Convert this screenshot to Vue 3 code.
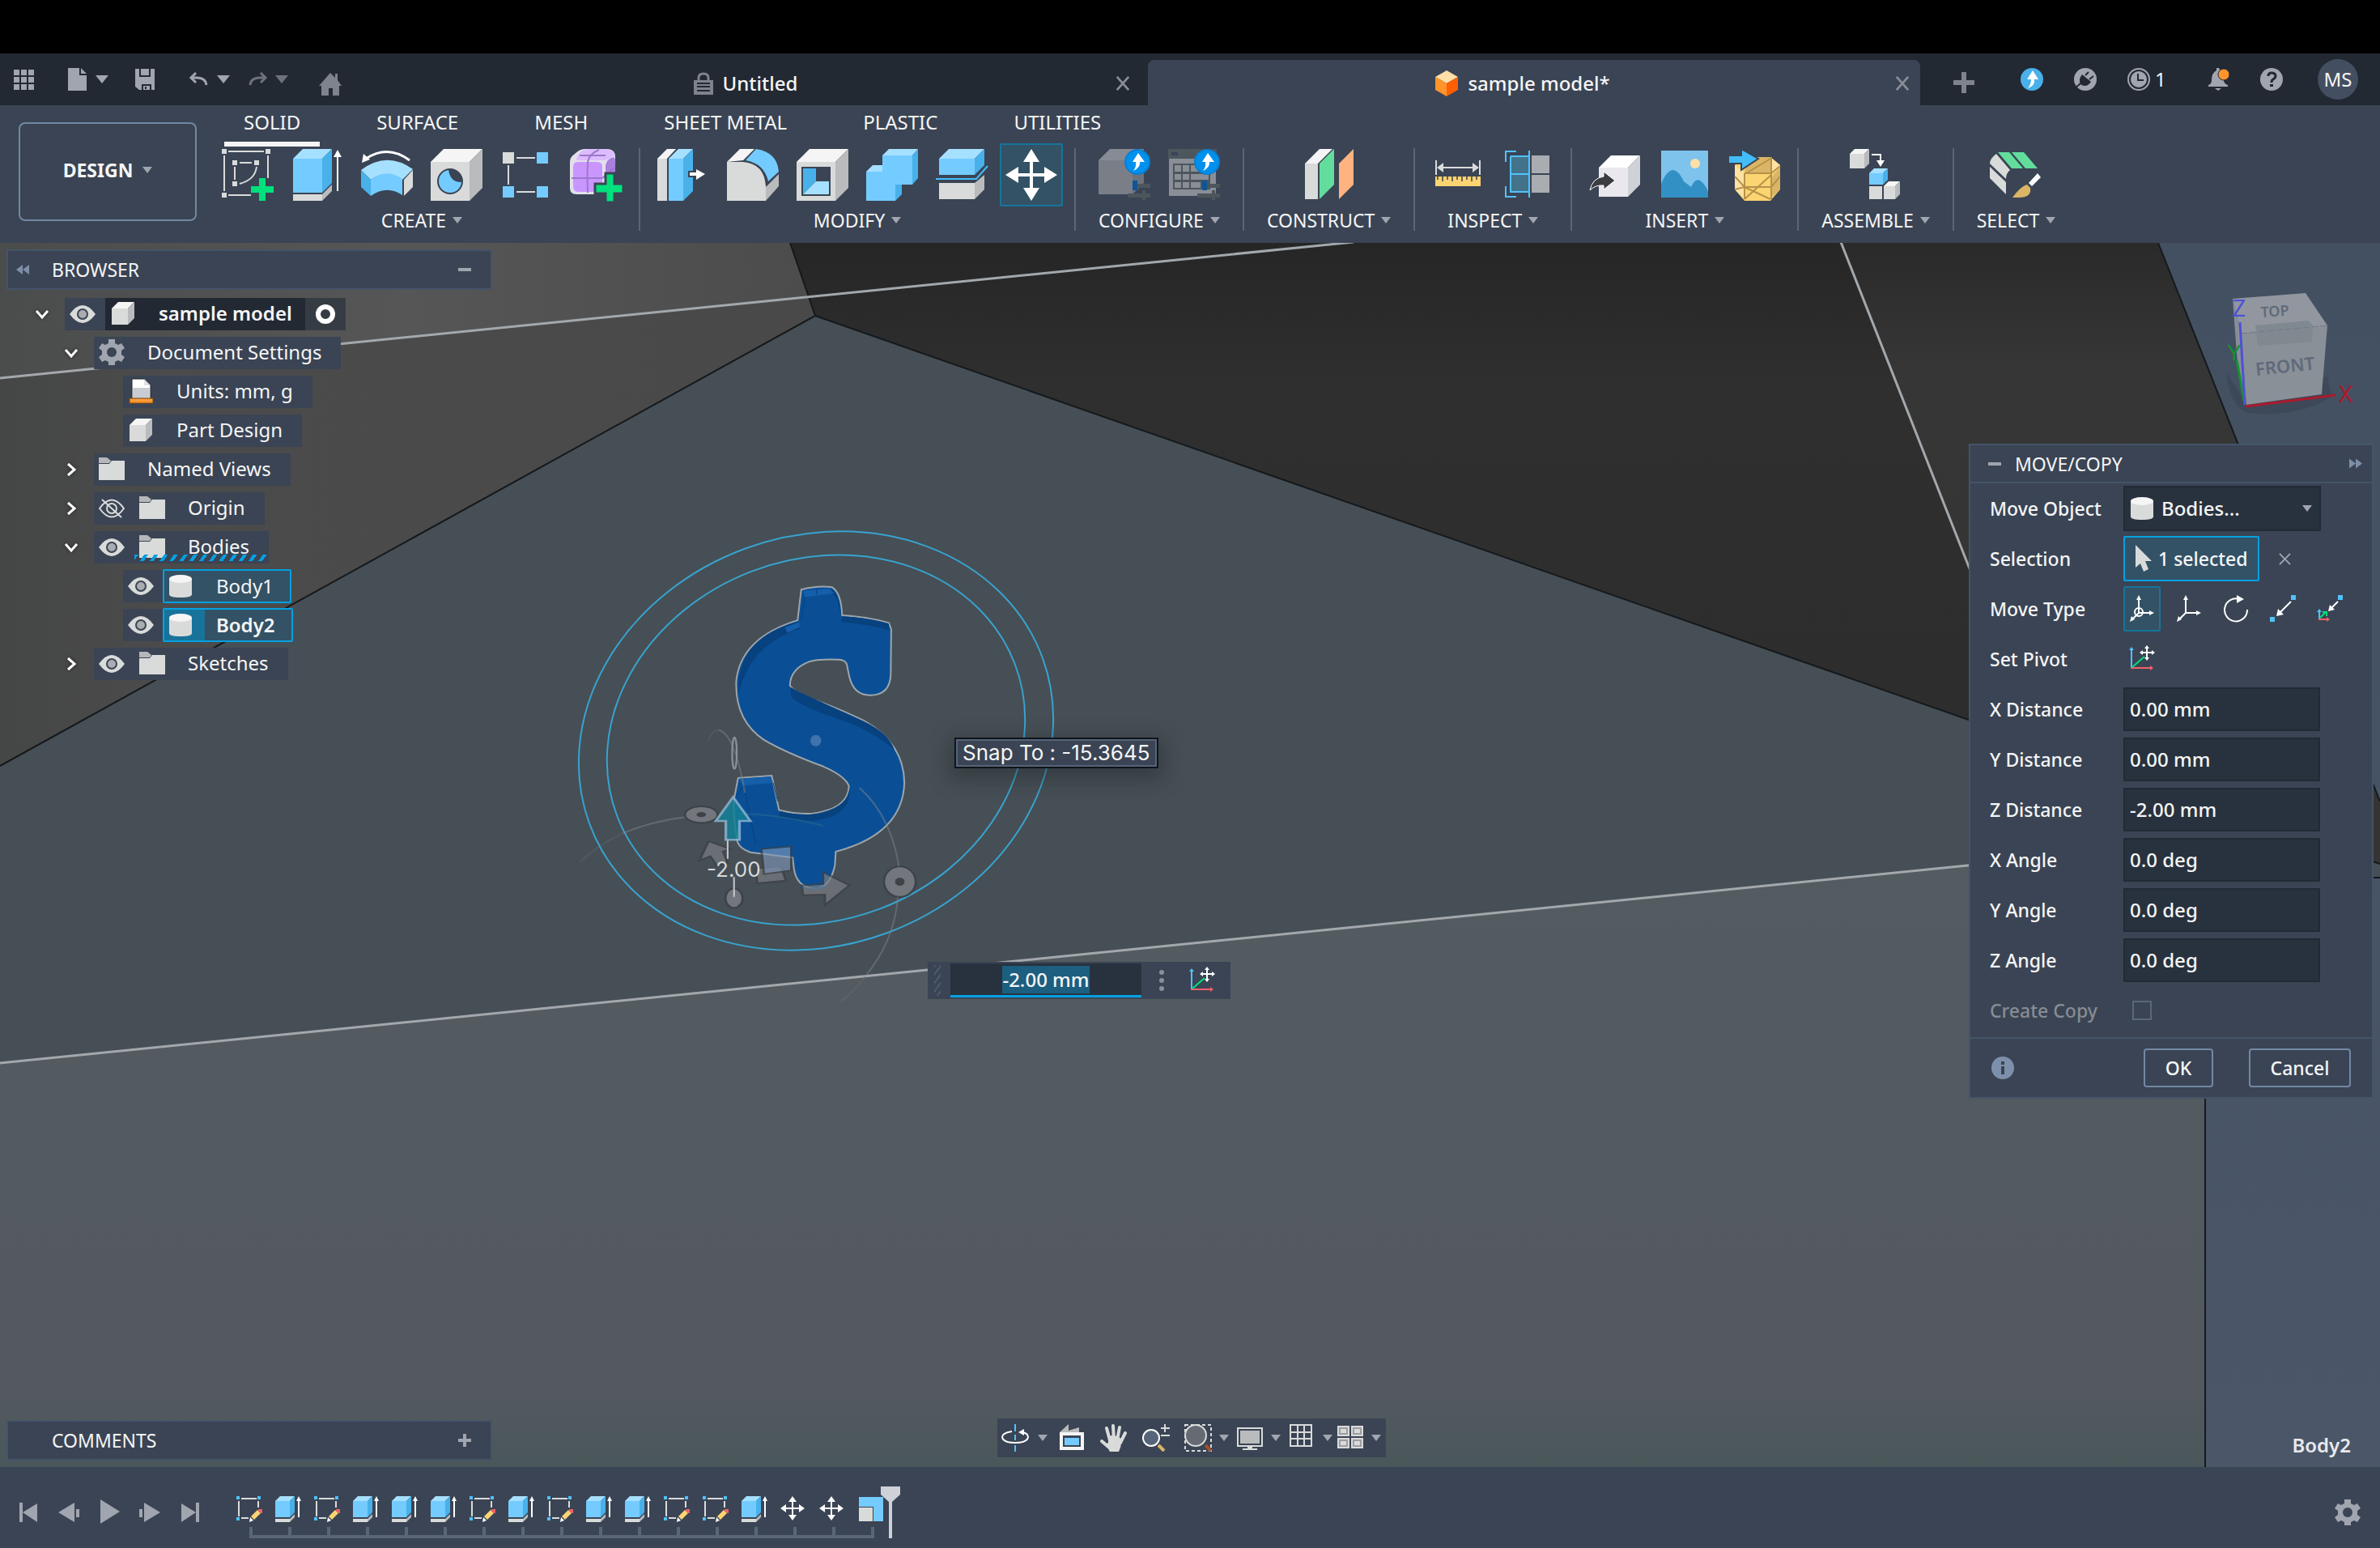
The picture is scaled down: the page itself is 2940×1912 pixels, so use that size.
<script setup>
import { ref } from 'vue'

const W = '#d9dbda'
const WT = '#f5f5f5'
const WS = '#b9bbbd'
const B = '#74cbff'
const BT = '#a6e0ff'
const BS = '#49b1ea'
const DK = '#3a4454'

const p = (fill, d, extra = '') => `<path fill="${fill}" d="${d}" ${extra}/>`
const l = (stroke, w, d, extra = '') => `<path fill="none" stroke="${stroke}" stroke-width="${w}" d="${d}" ${extra}/>`
const box = (x, y, w, h, d, f = W, t = WT, s = WS) =>
  p(f, `M${x} ${y + d}h${w}v${h}h${-w}z`) +
  p(t, `M${x} ${y + d}l${d} ${-d}h${w}l${-d} ${d}z`) +
  p(s, `M${x + w} ${y + d}l${d} ${-d}v${h}l${-d} ${d}z`)
const badge =
  `<circle cx="48" cy="16" r="15" fill="#0091ee" stroke="#0a7fd0" stroke-width="2"/>` +
  p('#fff', 'M49 5L57 16H51Q52 23 43 27Q47 22 46 16H42z')
const cfgPlus =
  p('#4c565c', 'M44 43h20v5h-20zM36 55h28v5h-28zM54 51h4v12h-4z') + p('#0f5596', 'M42 39h6v12h-6z')

const big = {
  sketch:
    p(W, 'M0 0h6v6h-6zM54 0h6v6h-6zM0 54h6v6h-6zM13 14h6v6h-6zM40 14h6v6h-6zM13 40h6v6h-6z') +
    l(W, 2, 'M8 3H52M3 8V52M57 8V36M8 57H36M22 17H37M16 22V38M43 22Q41 38 22 43') +
    p('#00e07c', 'M46 36h8v10h10v8h-10v10h-8v-10h-10v-8h10z'),
  extrude:
    '<g transform="translate(2)">' + box(0, 0, 36, 42, 12, B, BT, BS) + p(W, 'M0 56h36v8h-36z') +
    p(WS, 'M36 56l12 -12v8l-12 12z') + l('#fff', 2, 'M55 8V52') + p('#fff', 'M55 1l5 9h-10z') + '</g>',
  revolve:
    l('#fff', 3, 'M60 14Q33 -6 6 12') + p('#fff', 'M1 17L3 6L11 13z') +
    p(BT, 'M0 26Q32 2 64 25L51 38Q32 24 12 38z') + p(BS, 'M0 26l12 12v20l-12 -11z') +
    p(B, 'M12 38Q32 23 51 37V57Q32 44 12 58z') + p(W, 'M53 38L64 26V47L53 58z'),
  hole:
    box(0, 0, 48, 48, 16) + '<circle cx="24" cy="40" r="15" fill="#74cbff" stroke="#3a4454" stroke-width="2"/>' +
    p(DK, 'M22 25A15 15 0 0 1 39 41Q24 42 22 25z'),
  pattern:
    p(W, 'M3 4h14v14h-14z') + p(B, 'M45 4h14v14h-14zM3 46h14v14h-14zM45 46h14v14h-14z') +
    l(W, 2, 'M20 11H43M20 53H43M10 20V44'),
  form:
    p('#e3e0ea', 'M0 16Q0 10 6 6Q12 0 18 0H46Q56 0 56 10V38Q56 42 50 48Q42 56 36 56H8Q0 56 0 48z') +
    p('#dcbcff', 'M14 3Q18 0 24 0H46Q54 1 55 8Q50 12 44 14H8Q8 8 14 3z') +
    p('#c996ff', 'M4 22Q4 16 10 16H34Q40 16 40 22V46Q40 53 34 53H10Q4 53 4 46z') +
    p('#aa7fde', 'M44 20Q46 12 54 10Q57 12 56 20V38Q54 44 44 46z') +
    l('#9d78cc', 2, 'M2 36H40L56 22M22 54Q21 36 22 16Q24 6 36 1M12 8H44') +
    p('#00e07c', 'M44 30h11v13h11v12h-11v11h-11v-11h-13v-12h13z', 'stroke="#3a4454" stroke-width="3"'),
  press:
    p(W, 'M0 12h12v52h-12z') + p(WT, 'M0 12L12 0H23L12 12z') + box(14, 0, 18, 52, 12, B, BT, BS) +
    l(DK, 8, 'M38 31H52') + l('#fff', 4, 'M40 31H50') + p('#fff', 'M48 25l11 6l-11 7z'),
  fillet:
    p(W, 'M0 16H20Q46 18 48 46V64H0z') + p(WT, 'M0 16L16 0H34L20 14z') +
    p(B, 'M36 0Q62 4 64 28L51 40Q46 18 23 14z') + p(WS, 'M48 47L64 31V46L48 64z'),
  shell:
    box(0, 0, 48, 48, 16) + p(DK, 'M6 22h36v36h-36z') + p(BS, 'M8 24h16v16l-16 16z') + p(BT, 'M24 40h16v16h-32z'),
  combine:
    p(B, 'M0 28H20V8H57V44H36V64H0z') + p(BT, 'M20 8L28 0H64L57 8zM0 28L8 20H20V28z') +
    p(BS, 'M57 8L64 0V36L57 44zM36 44H44V56L36 64z'),
  split:
    box(4, 0, 44, 20, 12, B, BT, BS) + l('#42bdfa', 2, 'M0 37H50L64 21') + p(W, 'M4 42h44v20h-44z') +
    p(WS, 'M48 42L60 32V50L48 62z'),
  move:
    l('#fff', 4, 'M32 12V52M12 32H52') +
    p('#fff', 'M32 0l10 16h-20zM32 64l10 -16h-20zM0 32l16 -10v20zM64 32l-16 -10v20z'),
  configure: box(0, 0, 42, 42, 14, '#7a7e87', '#878b93', '#6c727b') + badge + cfgPlus,
  table:
    p('#4c565c', 'M0 0h60v12h-60z') + p('#8a8e96', 'M1 12h58v46h-58z') + p('#39435a', 'M4 4h8v4h-8z') +
    p('#4c565c', 'M6 18h46v32h-46z') +
    p('#8a8e96', 'M8 20h8v8h-8zM18 20h8v8h-8zM28 20h22v8h-22zM8 31h8v7h-8zM18 31h8v7h-8zM28 31h22v7h-22zM8 41h8v7h-8zM18 41h8v7h-8zM28 41h12v7h-12z') +
    badge + cfgPlus,
  construct:
    '<g transform="translate(2)">' + p(W, 'M0 18h16v44h-16z') + p(WT, 'M0 18L18 0H34L16 18z') +
    p('#62dd9c', 'M18 18L36 0V44L18 62z') + p('#ffb380', 'M42 18L60 0V44L42 62z') + '</g>',
  measure:
    l(W, 2, 'M5 14V32M59 14V32M10 23H54') + p(W, 'M6 23l8 -6v12zM58 23l-8 -6v12z') + p('#fcd472', 'M4 34h56v12h-56z') +
    l('#6b6450', 2, 'M7 34v4M13 34v6M19 34v4M25 34v6M31 34v4M37 34v6M43 34v4M49 34v6M55 34v4'),
  interfere:
    p('#43738b', 'M11 9h22v44h-22z') + l('#50c2fb', 2, 'M18 3H5V16M18 59H5V46M34 2V60M11 9H33M11 9V53H33M11 31H33') +
    p('#a9acb1', 'M37 8h22v22h-22zM37 32h22v22h-22z'),
  insert:
    '<g transform="translate(0 8)">' + box(12, 0, 36, 36, 15, '#e9e8ee', '#ffffff', '#cfd2d6') +
    p('#3b3e40', 'M32 31L18 20V26Q4 28 1 43Q8 36 18 37V42z', 'stroke="#fff" stroke-width="1"') + '</g>',
  picture:
    p('#7ec3ec', 'M3 2h58v58h-58z') + '<circle cx="45" cy="18" r="6" fill="#ffe0a8"/>' +
    p('#3290c4', 'M3 43Q10 26 18 26Q24 26 31 40L40 47Q45 36 51 39Q58 44 61 53V60H3z'),
  mesh:
    p('#fcd472', 'M8 20L16 12L32 10H52L64 20V50L52 64H20L8 50z') + p('#ffe2a3', 'M8 20L20 30V62L8 50zM52 10L64 20L54 30z') +
    p('#dab566', 'M22 14L32 10H52L53 31L20 30zM54 34L64 22V50L53 60z') +
    l('#b6924a', 2, 'M20 30H53L64 21M20 47H53L64 34M20 30V62M53 10V62M20 62L53 32M8 34L20 47M22 30L52 12M8 50L20 47L52 62') +
    l(DK, 10, 'M0 12H18') + p('#42bdfa', 'M0 8h16v-8l21 12l-21 14v-8h-16z', 'stroke="#3a4454" stroke-width="2"'),
  assemble:
    box(0, 0, 18, 18, 6) + l('#fff', 2, 'M27 7H38V16') + p('#fff', 'M38 22l-5 -8h10z') +
    box(24, 24, 17, 14, 6, B, BT, BS) + p(W, 'M24 46h16v16h-16z') + box(42, 40, 14, 16, 6),
  select:
    p('#62dd9c', 'M10 4H24L41 24H27zM27 4H42L59 24H44z') + p(W, 'M8 6L25 26Q20 30 20 37L0 18Q0 12 8 6zM0 22L20 41V56L0 36z') +
    p('#fff', 'M59 30L63 35L52 46L48 42z') + p('#dab566', 'M46 44L50 48Q52 60 36 60H28Q38 46 46 44z')
}

const EXT = box(0, 0, 18, 20, 6, B, BT, BS) + p(W, 'M0 28h18v4h-18z') + p(WS, 'M18 28l6 -6v4l-6 6z') +
  l('#fff', 2, 'M29 4V26') + p('#fff', 'M29 0l3 6h-6z')
const SKT = l(W, 2, 'M6 3H25M3 6V25M27 6V14M6 27H15') + p('#50c2fb', 'M0 0h4v4h-4zM26 0h4v4h-4zM0 26h4v4h-4z') +
  p('#fcd472', 'M26 17l4 4L22 29l-4 -4z') + p('#fff', 'M17 26l4 4l-5 2z') + p('#f0606a', 'M27 16h5v5h-2l-3 -3z')
const MOV = l('#fff', 2, 'M15 6V24M6 15H24') +
  p('#fff', 'M15 0l5 7h-10zM15 30l5 -7h-10zM0 15l7 -5v10zM30 15l-7 -5v10z')
const SCL = p(B, 'M1 1h30v30h-30z') + p(DK, 'M1 13h18v18h-18z') + p(W, 'M1 14h17v17h-17z')
const small = { ext: EXT, skt: SKT, mov: MOV, scl: SCL }
const features = ['skt', 'ext', 'skt', 'ext', 'ext', 'ext', 'skt', 'ext', 'skt', 'ext', 'ext', 'skt', 'skt', 'ext', 'mov', 'mov', 'scl']

const G = '#a1a5b0'
const gear = (c, hole) =>
  p(c, 'M12 0h8v5l4 2l4 -2l4 6l-4 3v5l4 3l-4 6l-4 -2l-4 2v5h-8v-5l-4 -2l-4 2l-4 -6l4 -3v-5l-4 -3l4 -6l4 2l4 -2z') +
  `<circle cx="16" cy="16" r="6" fill="${hole}"/>`
const eye = p(W, 'M0 16Q16 -6 32 16Q16 38 0 16z') + `<circle cx="16" cy="16" r="6" fill="#a9acb0" stroke="${DK}" stroke-width="2"/>`
const tree = {
  eye,
  eyeOff: l(W, 2, 'M1 16Q16 -5 31 16Q16 37 1 16zM4 5L28 27') + `<circle cx="16" cy="16" r="6" fill="none" stroke="${W}" stroke-width="2"/>`,
  cube: box(2, 2, 20, 20, 8),
  gear: gear(G, DK),
  folder: p('#b5b7ba', 'M0 2h10l5 4l-2 3H0z') + p(W, 'M0 10h13l3 -4h16v24H0z'),
  units: p('#fff', 'M5 1H20L28 9V26H5z', 'stroke="#222" stroke-width="1"') + p('#c9ccd2', 'M6 12h21v13h-21z') +
    p('#dfe1e5', 'M20 1L28 9H20z') + p('#f7932b', 'M2 25h29v6h-29z', 'stroke="#7a4510" stroke-width="1"') + l('#ffe0a8', 1, 'M4 27H29', 'stroke-dasharray="1 2"'),
  body: p(W, 'M2 7V26Q2 30 16 30Q30 30 30 26V7z') + '<ellipse cx="16" cy="7" rx="14" ry="5" fill="#f5f5f5"/>'
}
const rows = [
  { t: 'sample model', i: 'cube', e: 'eye', c: 'd', lv: 0, root: true },
  { t: 'Document Settings', i: 'gear', c: 'd', lv: 1 },
  { t: 'Units: mm, g', i: 'units', lv: 2 },
  { t: 'Part Design', i: 'cube', lv: 2 },
  { t: 'Named Views', i: 'folder', c: 'r', lv: 1 },
  { t: 'Origin', i: 'folder', e: 'eyeOff', c: 'r', lv: 1 },
  { t: 'Bodies', i: 'folder', e: 'eye', c: 'd', lv: 1, wavy: true },
  { t: 'Body1', i: 'body', e: 'eye', lv: 2, sel: true },
  { t: 'Body2', i: 'body', e: 'eye', lv: 2, sel: true, active: true },
  { t: 'Sketches', i: 'folder', e: 'eye', c: 'r', lv: 1 }
]

const bar = {
  grid: p(G, 'M1 2h7v7h-7zM10 2h7v7h-7zM19 2h7v7h-7zM1 11h7v7h-7zM10 11h7v7h-7zM19 11h7v7h-7zM1 20h7v7h-7zM10 20h7v7h-7zM19 20h7v7h-7z'),
  doc: p(G, 'M2 0h14v9h9v19h-23zM18 0l7 7h-7z'),
  save: p(G, 'M1 1h5v10h14v-10h5v26h-4v-7h-12v7h-3l-5 -4zM8 1h10v8h-10zM11 22h8v5h-8z') + p('#222933', 'M13 23h2v3h-2z'),
  undo: l(G, 3, 'M5 12H11Q22 12 23 21') + l(G, 3, 'M10 6L4 12L10 18'),
  redo: l('#6d727c', 3, 'M23 12H17Q6 12 5 21') + l('#6d727c', 3, 'M18 6L24 12L18 18'),
  home: p('#7f838b', 'M14 0l6 6v-5h3v8l5 7h-3v12h-8v-9h-5v9h-9v-12h-3z'),
  lock: l('#7f838b', 3, 'M8 11V7Q8 2 14 2Q20 2 20 7V11') + p('#7f838b', 'M2 10h24v18h-24z') + l('#222933', 2, 'M6 14H22M6 18H22M6 23H22'),
  cube: p('#ffdfa8', 'M16 0l14 8l-14 8l-14 -8z') + p('#ff942b', 'M2 8l14 8v16l-14 -8z') + p('#ff5f00', 'M30 8l-14 8v16l14 -8z'),
  plus: p('#7f838b', 'M11 1h6v10h10v6h-10v10h-6v-10h-10v-6h10z'),
  up: '<circle cx="14" cy="14" r="14" fill="#49b1ea"/>' + p('#fff', 'M15 3L22 14H17Q18 22 9 25Q13 20 13 14H8z'),
  plug: '<circle cx="14" cy="14" r="14" fill="#a1a5b0"/>' + l('#222933', 2, 'M0 26L8 19M14 9L18 5M19 14L24 10') + p('#222933', 'M10 8l11 9q-3 5 -8 5q-3 0 -5 -2q-3 -6 2 -12z'),
  clock: '<circle cx="14" cy="14" r="13" fill="none" stroke="#a1a5b0" stroke-width="2"/><circle cx="14" cy="14" r="10" fill="#a1a5b0"/>' + l('#222933', 2, 'M13 7V15H20'),
  bell: p(G, 'M12 0h3q1 3 4 5q3 5 2 11q1 4 5 5v2h-24v-2q4 -1 4 -6q0 -9 6 -12zM10 25h8l-4 3z') + '<circle cx="21" cy="8" r="7" fill="#ff942b" stroke="#222933" stroke-width="1"/>',
  help: '<circle cx="14" cy="14" r="14" fill="#a1a5b0"/>' + l('#222933', 3, 'M10 10Q10 6 14 6Q19 6 19 10Q19 12 16 14Q14 15 14 18') + p('#222933', 'M12 20h4v3h-4z')
}

const ribbon = [
  { name: 'CREATE', tools: ['sketch', 'extrude', 'revolve', 'hole', 'pattern', 'form'] },
  { name: 'MODIFY', tools: ['press', 'fillet', 'shell', 'combine', 'split', 'move'] },
  { name: 'CONFIGURE', tools: ['configure', 'table'] },
  { name: 'CONSTRUCT', tools: ['construct'] },
  { name: 'INSPECT', tools: ['measure', 'interfere'] },
  { name: 'INSERT', tools: ['insert', 'picture', 'mesh'] },
  { name: 'ASSEMBLE', tools: ['assemble'] },
  { name: 'SELECT', tools: ['select'] }
]
const tabs = ['SOLID', 'SURFACE', 'MESH', 'SHEET METAL', 'PLASTIC', 'UTILITIES']

const arrows3 = l('#fff', 2, 'M13 22V5M13 22H27M13 22L5 30') + p('#fff', 'M13 0l3 6h-6zM32 22l-6 -3v6zM2 33l2 -7l4 4z')
const pivot = l('#50c2fb', 2, 'M4 28V5') + p('#50c2fb', 'M4 2l3 4h-6z') + l('#f0606a', 2, 'M3 28H28') + p('#f0606a', 'M31 28l-4 3v-6z') +
  l('#00e07c', 2, 'M5 27L20 14') + l('#fff', 2, 'M23 3V16M16 9H31') + p('#fff', 'M23 0l3 4h-6zM23 19l3 -4h-6zM14 9l4 -3v6zM33 9l-4 -3v6z')
const types = [
  arrows3 + '<circle cx="13" cy="21" r="5" fill="none" stroke="#fff" stroke-width="2"/>',
  arrows3,
  l('#fff', 2, 'M21 5A14 14 0 1 0 31 18') + p('#fff', 'M18 0l9 5l-9 5z'),
  l('#fff', 2, 'M27 8L12 23') + p('#fff', 'M9 26l2 -9l7 7z') + p('#50c2fb', 'M27 0h6v6h-6zM1 27h6v6h-6z'),
  l('#fff', 2, 'M27 8L19 16') + p('#fff', 'M15 20l2 -8l6 6z') + p('#50c2fb', 'M27 0h6v6h-6z') + l('#50c2fb', 2, 'M4 30V20') +
    p('#50c2fb', 'M4 17l3 4h-6z') + l('#f0606a', 2, 'M3 30H13') + p('#f0606a', 'M17 30l-4 3v-6z') + l('#00e07c', 2, 'M5 28L11 22M8 21H13V26')
]
const fields = ref([
  { n: 'X Distance', v: '0.00 mm' },
  { n: 'Y Distance', v: '0.00 mm' },
  { n: 'Z Distance', v: '-2.00 mm' },
  { n: 'X Angle', v: '0.0 deg' },
  { n: 'Y Angle', v: '0.0 deg' },
  { n: 'Z Angle', v: '0.0 deg' }
])
const offset = ref('-2.00 mm')

const nav = [
  { n: 'Orbit', d: true, s: l('#50c2fb', 2, 'M17 0V9M17 13V20M17 26V34') + l('#fff', 2, 'M13 9Q1 11 1 16Q2 23 17 23Q32 23 33 16Q33 11 25 10') + p('#fff', 'M21 10l7 -4v8z') },
  { n: 'Look at', s: p('#b9bbbd', 'M2 10L13 0V8L26 4V10z') + p('#f5f5f5', 'M2 10h30v22h-30z') + p(DK, 'M6 14h22v14h-22z') + p(B, 'M8 17h18v9h-18z') },
  { n: 'Pan', s: l(W, 4, 'M2 21L10 28M8 5L12 20M16 2L17 20M24 4L21 20M31 11L25 23', 'stroke-linecap="round"') + p(W, 'M10 15Q18 12 26 18Q27 26 23 34H12Q10 30 6 25L10 23z') },
  { n: 'Zoom', s: '<circle cx="11" cy="17" r="10" fill="#566579" stroke="#fff" stroke-width="2"/>' + l('#dab566', 4, 'M20 26L27 33') + l(W, 2, 'M28 0V10M23 5H34M23 14H34') },
  { n: 'Fit', d: true, s: l(W, 2, 'M1 1H33V33H1z', 'stroke-dasharray="4 3"') + '<circle cx="14" cy="14" r="13" fill="#656a73" stroke="#d9dbda" stroke-width="2"/>' + l('#a0522d', 4, 'M26 26L33 33') },
  { n: 'Display settings', d: true, s: l(W, 2, 'M2 5H32V27H2z') + p('#b9bbbd', 'M5 8h24v16h-24z') + p(W, 'M14 28h6v2h6v2h-18v-2h6z') },
  { n: 'Grid', d: true, s: l(W, 2, 'M3 1H29V27H3zM12 1V27M20 1V27M3 10H29M3 18H29') },
  { n: 'Viewports', d: true, s: [[1, 2], [18, 2], [1, 17], [18, 17]].map(([x, y]) => p(W, `M${x} ${y}h15v13h-15z`) + p('#9c9ea2', `M${x + 2} ${y + 2}h11v9h-11z`) + p(W, `M${x + 4} ${y + 4}h7v5h-7z`)).join('') }
]
const play = [
  { n: 'Go to start', s: p(G, 'M5 4h4v24h-4zM27 5v23l-18 -12z') },
  { n: 'Step back', s: p(G, 'M3 16l20 -12v24zM25 12h4v10h-4z') },
  { n: 'Play', s: p(G, 'M5 0l24 15l-24 15z') },
  { n: 'Step forward', s: p(G, 'M29 16l-20 -12v24zM3 12h4v10h-4z') },
  { n: 'Go to end', s: p(G, 'M23 4h4v24h-4zM5 5v23l18 -12z') }
]
</script>

<template>
  <div class="app">
    <div class="menubar"></div>
    <header class="titlebar">
      <div class="quick">
        <button class="ib" aria-label="Data panel"><svg viewBox="0 0 28 28" v-html="bar.grid" /></button>
        <button class="ib gl" aria-label="File"><svg viewBox="0 0 28 28" v-html="bar.doc" /><i class="caret" /></button>
        <button class="ib gm" aria-label="Save"><svg viewBox="0 0 28 28" v-html="bar.save" /></button>
        <button class="ib gl" aria-label="Undo"><svg viewBox="0 0 28 28" v-html="bar.undo" /><i class="caret" /></button>
        <button class="ib gs dim" aria-label="Redo"><svg viewBox="0 0 28 28" v-html="bar.redo" /><i class="caret" /></button>
        <button class="ib gl home" aria-label="Home"><svg viewBox="0 0 28 28" v-html="bar.home" /></button>
      </div>
      <div class="doctab">
        <span class="doctitle idle"><svg viewBox="0 0 28 28" v-html="bar.lock" />Untitled</span>
        <button class="close" aria-label="Close Untitled"><svg viewBox="0 0 20 20"><path d="M2 1L18 19M18 1L2 19" /></svg></button>
      </div>
      <div class="doctab on">
        <span class="doctitle"><svg class="c32" viewBox="0 0 32 32" v-html="bar.cube" />sample model*</span>
        <button class="close" aria-label="Close sample model"><svg viewBox="0 0 20 20"><path d="M2 1L18 19M18 1L2 19" /></svg></button>
      </div>
      <div class="status">
        <button class="ib newdoc" aria-label="New design"><svg viewBox="0 0 28 28" v-html="bar.plus" /></button>
        <button class="ib" aria-label="Updates"><svg viewBox="0 0 28 28" v-html="bar.up" /></button>
        <button class="ib" aria-label="Extensions"><svg viewBox="0 0 28 28" v-html="bar.plug" /></button>
        <button class="ib jobs"><svg viewBox="0 0 28 28" v-html="bar.clock" />1</button>
        <button class="ib" aria-label="Notifications"><svg viewBox="0 0 28 28" v-html="bar.bell" /></button>
        <button class="ib" aria-label="Help"><svg viewBox="0 0 28 28" v-html="bar.help" /></button>
        <button class="avatar">MS</button>
      </div>
    </header>

    <section class="toolbar">
      <button class="design">DESIGN<i class="caret sm" /></button>
      <div class="ribbon">
        <nav class="tabs">
          <button v-for="(t, i) in tabs" :key="t" :class="{ on: i === 0 }">{{ t }}</button>
        </nav>
        <div class="groups">
          <div v-for="g in ribbon" :key="g.name" class="group">
            <div class="tools">
              <button v-for="t in g.tools" :key="t" class="tool" :class="{ on: t === 'move' }" :aria-label="t">
                <svg viewBox="0 0 64 64" v-html="big[t]" />
              </button>
            </div>
            <button class="glabel">{{ g.name }}<i class="caret sm" /></button>
          </div>
        </div>
      </div>
    </section>

    <main class="view">
      <svg class="scene" viewBox="0 300 2940 1512" preserveAspectRatio="xMidYMid slice">
        <defs>
          <linearGradient id="gBg" x1="0" y1="0" x2="0" y2="1"><stop offset="0" stop-color="#435062" /><stop offset="1" stop-color="#4b5768" /></linearGradient>
          <linearGradient id="gLow" x1="0" y1="0" x2="0" y2="1"><stop offset="0" stop-color="#535c61" /><stop offset=".88" stop-color="#53595f" /><stop offset="1" stop-color="#4a575a" /></linearGradient>
          <linearGradient id="gDark" x1="0" y1="0" x2="0" y2="1"><stop offset="0" stop-color="#262626" /><stop offset=".3" stop-color="#2f2f2f" /><stop offset="1" stop-color="#2d2d2d" /></linearGradient>
          <linearGradient id="gRight" x1="0" y1="0" x2="0" y2="1"><stop offset="0" stop-color="#2a2a2a" /><stop offset=".2" stop-color="#363636" /><stop offset="1" stop-color="#353433" /></linearGradient>
          <linearGradient id="gLeft" x1="0" y1="0" x2="1" y2="0"><stop offset="0" stop-color="#454646" /><stop offset=".2" stop-color="#4b4b4b" /><stop offset="1" stop-color="#494949" /></linearGradient>
          <linearGradient id="gStrip" x1="0" y1="0" x2="1" y2="0"><stop offset="0" stop-color="#4b4c4c" /><stop offset=".5" stop-color="#565656" /><stop offset="1" stop-color="#4c4c4c" /></linearGradient>
        </defs>
        <rect x="0" y="300" width="2940" height="1512" fill="url(#gBg)" />
        <path fill="url(#gRight)" d="M976 300H2666L2940 990V1067L1007 390z" />
        <path fill="url(#gDark)" d="M976 300H2275L2502 880L2432 889L1007 390z" />
        <path fill="url(#gLeft)" d="M0 300H976L1007 390L0 946z" />
        <path fill="url(#gStrip)" d="M0 300H976L998 367L0 467z" />
        <path fill="#464f55" d="M1007 390L2940 1067V1084H2724L2432 1068L0 1313V946z" />
        <path fill="url(#gLow)" d="M0 1313L2432 1068L2724 1039V1812H0z" />
        <path class="edge" d="M976 300L1007 390L0 946M1007 390L2940 1067M2666 300L2940 990M2724 1300V1812M2724 1084H2940" />
        <path class="seam" d="M0 467L1672 299M2274 299L2434 705M0 1313L2440 1068" />
        <g fill="none" stroke="#38a3cf" stroke-width="2">
          <ellipse cx="1008" cy="915" rx="298" ry="253" transform="rotate(-20 1008 915)" />
          <ellipse cx="1008" cy="914" rx="263" ry="223" transform="rotate(-21 1008 914)" />
        </g>
        <g transform="translate(680 620) scale(.5612 .4082)">
          <path fill="#0a4f96" stroke="#9ea5aa" stroke-width="2" vector-effect="non-scaling-stroke" d="M552 265Q590 252 620 258Q640 275 642 343Q700 348 745 366L750 385L749 520Q748 585 703 585Q668 585 658 530L652 490Q648 478 635 477Q590 475 570 483Q528 505 527 555Q535 575 580 598Q640 628 690 662Q778 730 779 850Q775 1005 628 1058L626 1100Q615 1170 580 1170Q542 1165 536 1110L533 1076L440 1060Q418 1050 412 1030Q402 960 404 900L413 835L487 828L503 932Q540 945 575 943Q655 930 657 860Q650 830 600 800Q520 760 470 720Q405 660 409 540Q420 410 544 358z" />
          <g fill="#07427f">
            <path d="M617 262Q636 276 639 340L632 300Q626 282 617 274zM546 362L550 384Q440 430 414 580Q408 410 546 362z" />
            <path d="M642 346Q700 350 745 368V388Q700 370 640 364zM528 560L548 575Q620 620 690 664Q745 700 757 750Q700 685 640 660Q550 620 530 590z" />
            <path d="M505 935Q540 948 575 945Q655 930 658 865Q665 950 580 965Q530 965 503 950z" />
          </g>
          <g fill="#155ea9">
            <path d="M556 268L615 262L624 277L560 288zM516 380L547 364L550 378L522 396zM415 838L484 831L490 850L425 858z" />
            <path d="M545 1160Q580 1178 615 1155L605 1168Q580 1176 555 1170z" />
          </g>
          <path fill="none" stroke="#073f7a" stroke-width="1" vector-effect="non-scaling-stroke" d="M425 858L405 900M425 858L452 1035M490 850L500 905M560 288L552 355M586 265V280" />
          <ellipse cx="584" cy="722" rx="12" ry="17" fill="#3f73ad" />
          <g fill="none" stroke="#7d868b" stroke-width="2" opacity=".5">
            <path vector-effect="non-scaling-stroke" d="M160 1002Q225 965 300 953M680 865Q750 950 768 1110M765 1190Q758 1330 690 1440M370 690Q405 700 428 880" />
            <path opacity=".4" vector-effect="non-scaling-stroke" d="M66 1090Q100 1040 160 1002M690 1440Q665 1485 640 1510M348 722Q355 690 370 690" />
            <path stroke="#2c6f8c" vector-effect="non-scaling-stroke" d="M365 945Q480 935 600 980" />
          </g>
          <ellipse cx="405" cy="760" rx="5" ry="48" fill="none" stroke="#8b9194" stroke-width="4" />
          <g fill="#7b7f84" stroke="#3c4146" stroke-width="5" opacity=".85">
            <ellipse cx="332" cy="946" rx="36" ry="25" /><ellipse cx="332" cy="946" rx="8" ry="5" fill="#3c4146" />
            <ellipse cx="769" cy="1149" rx="35" ry="46" /><ellipse cx="769" cy="1149" rx="8" ry="10" fill="#3c4146" />
            <ellipse cx="404" cy="1199" rx="19" ry="29" />
            <path opacity=".8" d="M348 1026L396 1050L380 1058L390 1092L366 1100L352 1072L328 1085z" />
            <path opacity=".8" d="M452 1108L508 1103L518 1146L455 1154z" />
            <path fill="#7f97b8" opacity=".75" d="M464 1050L530 1042V1115L470 1126z" />
            <path opacity=".8" d="M553 1160L600 1156V1120L658 1160L604 1220V1188L556 1190z" />
          </g>
          <path fill="none" stroke="#c6cacc" stroke-width="2" vector-effect="non-scaling-stroke" d="M404 1135V1195M390 1020V1080" />
          <path fill="#138196" stroke="#8ab4d2" stroke-width="6" opacity=".85" d="M402 893L440 965H416V1022H386V965H364z" />
        </g>
        <text x="873" y="1083" class="dim-text">-2.00</text>
      </svg>

      <svg class="cube" viewBox="2730 350 200 180" role="img" aria-label="View cube">
        <path fill="#3b4656" d="M2750 460Q2754 500 2776 510Q2840 516 2880 490L2875 465L2770 490z" opacity=".7" />
        <path fill="#92979f" d="M2758 369L2848 362L2875 402L2768 412z" />
        <path fill="#878e98" d="M2758 369L2768 412L2775 500L2765 463z" />
        <path fill="#8a9097" d="M2768 412L2875 402L2868 487L2775 500z" />
        <path fill="#808890" d="M2786 402L2852 396L2857 402L2856 422L2789 427z" />
        <path fill="none" stroke="#737b86" d="M2768 412L2875 402" stroke-dasharray="8 3" />
        <text x="2793" y="392" class="face top" transform="rotate(-4 2793 392)">TOP</text>
        <text x="2787" y="464" class="face front" transform="rotate(-6 2787 464)">FRONT</text>
        <path stroke="#12932f" stroke-width="3" d="M2763 445L2773 500" />
        <path stroke="#4e51d6" stroke-width="3" d="M2767 398L2773 500" />
        <path stroke="#ab1a2c" stroke-width="3" d="M2774 502L2885 488" />
        <text x="2888" y="497" class="axis" fill="#ab1a2c">X</text>
        <text x="2751" y="445" class="axis y" fill="#12932f">Y</text>
        <text x="2757" y="391" class="axis" fill="#4e51d6">Z</text>
      </svg>

      <aside class="browser">
        <header class="phead"><i class="dbl left" /><h2>BROWSER</h2><button class="min" aria-label="Collapse browser" /></header>
        <ul class="tree">
          <li v-for="r in rows" :key="r.t" :class="['lv' + r.lv, { root: r.root, sel: r.sel, active: r.active, wavy: r.wavy }]">
            <button v-if="r.c" class="chev" :aria-label="'Toggle ' + r.t">
              <svg viewBox="0 0 24 24"><path :d="r.c === 'd' ? 'M5 8L12 16L19 8' : 'M8 5L16 12L8 19'" /></svg>
            </button>
            <button v-if="r.e" class="eye" :aria-label="'Visibility of ' + r.t"><svg viewBox="0 0 32 32" v-html="tree[r.e]" /></button>
            <button class="node"><svg viewBox="0 0 32 32" v-html="tree[r.i]" /><span>{{ r.t }}</span></button>
            <span v-if="r.root" class="radio"><i /></span>
          </li>
        </ul>
      </aside>

      <div class="snap">Snap To : -15.3645</div>
      <div class="float">
        <i class="grip" />
        <input v-model="offset" aria-label="Offset distance" />
        <button class="dots" aria-label="More"><i /><i /><i /></button>
        <button class="pv" aria-label="Set pivot"><svg viewBox="0 0 34 34" v-html="pivot" /></button>
      </div>

      <form class="panel" @submit.prevent>
        <header class="phead"><button type="button" class="min" aria-label="Collapse" /><h2>MOVE/COPY</h2><i class="dbl right" /></header>
        <div class="rows">
          <div class="row">
            <label for="obj">Move Object</label>
            <div class="drop"><svg viewBox="0 0 32 32" v-html="tree.body" /><select id="obj"><option>Bodies...</option></select><i class="caret sm" /></div>
          </div>
          <div class="row">
            <span class="lab">Selection</span>
            <button type="button" class="picked"><svg viewBox="0 0 24 34"><path d="M2 0L22 20H14L18 30L12 33L8 23L2 28z" /></svg>1 selected</button>
            <button type="button" class="clear" aria-label="Clear selection"><svg viewBox="0 0 16 16"><path d="M1 1L15 15M15 1L1 15" /></svg></button>
          </div>
          <div class="row">
            <span class="lab">Move Type</span>
            <div class="types">
              <button v-for="(t, i) in types" :key="i" type="button" :class="{ on: i === 0 }" :aria-label="'Move type ' + (i + 1)"><svg viewBox="0 0 34 34" v-html="t" /></button>
            </div>
          </div>
          <div class="row">
            <span class="lab">Set Pivot</span>
            <div class="types"><button type="button" aria-label="Set pivot point"><svg viewBox="0 0 34 34" v-html="pivot" /></button></div>
          </div>
          <div v-for="(f, i) in fields" :key="f.n" class="row">
            <label :for="'f' + i">{{ f.n }}</label>
            <input :id="'f' + i" v-model="f.v" class="field" />
          </div>
          <div class="row off">
            <label for="copy">Create Copy</label>
            <input id="copy" type="checkbox" disabled />
          </div>
        </div>
        <footer>
          <svg class="info" viewBox="0 0 28 28"><circle cx="14" cy="14" r="14" /><path d="M12 6h4v4h-4zM12 12h4v10h-4z" /></svg>
          <button type="button" class="btn ok">OK</button>
          <button type="button" class="btn">Cancel</button>
        </footer>
      </form>

      <div class="comments phead"><h2>COMMENTS</h2><button class="add" aria-label="Add comment"><svg viewBox="0 0 16 16"><path d="M6 0h4v6h6v4h-6v6h-4v-6h-6v-4h6z" /></svg></button></div>
      <div class="navbar">
        <button v-for="n in nav" :key="n.n" :class="{ dd: n.d }" :aria-label="n.n"><svg viewBox="0 0 34 34" v-html="n.s" /><i v-if="n.d" class="caret sm" /></button>
      </div>
      <div class="hint">Body2</div>
    </main>

    <footer class="timeline">
      <div class="play">
        <button v-for="b in play" :key="b.n" :aria-label="b.n"><svg viewBox="0 0 32 32" v-html="b.s" /></button>
      </div>
      <ol class="features">
        <li v-for="(f, i) in features" :key="i"><button :aria-label="'Feature ' + (i + 1)"><svg viewBox="0 0 32 32" v-html="small[f]" /></button><i /></li>
      </ol>
      <svg class="marker" viewBox="0 0 24 64"><path d="M0 0h24v10l-10 9v45h-4v-45l-10 -9z" /></svg>
      <button class="settings" aria-label="Timeline settings"><svg viewBox="0 0 32 32" v-html="gear('#a1a5b0', '#3a4454')" /></button>
    </footer>
  </div>
</template>

<style>
html, body { background: #3a4454; }
</style>

<style scoped>
.app { display: flex; flex-direction: column; min-height: 100vh; font-family: "Noto Sans", "Open Sans", sans-serif; font-size: 24px; line-height: 32px; color: #f5f5f5; }
.app * { box-sizing: border-box; }
button { background: none; border: 0; padding: 0; margin: 0; font: inherit; color: inherit; }
input, select { font: inherit; color: inherit; }
svg { display: block; flex: none; }
h2 { margin: 0; font-size: 23px; font-weight: 400; line-height: 32px; }
.caret { flex: none; display: block; width: 0; height: 0; border: 8px solid transparent; border-top: 10px solid #a1a5b0; border-bottom: 0; }
.caret.sm { border-width: 8px 6px 0; }

.menubar { height: 66px; background: #000; }
.titlebar { display: flex; height: 64px; background: #222933; }
.quick { display: flex; align-items: center; width: 464px; padding-left: 16px; }
.ib { display: flex; align-items: center; height: 64px; }
.ib svg { width: 28px; height: 28px; }
.ib .caret { margin-left: 8px; }
.gs { margin-left: 20px; }
.gm { margin-left: 32px; }
.gl { margin-left: 38px; }
.dim .caret { border-top-color: #6d727c; }
.home { padding-top: 12px; }
.doctab { flex: 1; display: flex; align-items: center; margin-top: 8px; padding-top: 2px; border-radius: 8px 8px 0 0; font-weight: 500; }
.doctab.on { background: #3a4454; }
.doctitle { flex: 1; display: flex; align-items: center; justify-content: center; gap: 10px; }
.doctitle.idle { padding-right: 12px; }
.doctitle svg { width: 28px; height: 28px; }
.doctitle .c32 { width: 32px; height: 32px; }
.close { width: 40px; margin-left: -10px; display: flex; }
.on .close { padding-left: 9px; }
.close svg { width: 18px; height: 18px; fill: none; stroke: #8a8e96; stroke-width: 3; }
.status { display: flex; align-items: center; gap: 38px; padding: 0 27px 0 40px; }
.newdoc { margin-right: 18px; padding-top: 8px; }
.jobs { gap: 6px; width: 48px; margin-right: 12px; }
.avatar { width: 50px; height: 50px; margin-left: 5px; border-radius: 25px; background: #434f61; line-height: 50px; }

.toolbar { display: flex; height: 170px; background: #3a4454; }
.design { display: flex; align-items: center; justify-content: center; gap: 12px; width: 220px; height: 122px; margin: 21px 10px 0 23px; padding-bottom: 4px; border: 2px solid #7288a3; border-radius: 8px; font-weight: 700; font-size: 23px; }
.ribbon { flex: 1; }
.tabs { display: flex; gap: 46px; height: 47px; padding-left: 24px; }
.tabs button { position: relative; height: 42px; padding: 0 24px; white-space: nowrap; }
.tabs .on::after { content: ""; position: absolute; left: 0; right: 0; top: 45px; height: 6px; background: #f5f5f5; }
.groups { display: flex; }
.group { position: relative; display: flex; flex-direction: column; align-items: center; padding: 0 14px; border-right: 2px solid transparent; }
.group:not(:last-child)::after { content: ""; position: absolute; right: -2px; top: 6px; width: 2px; height: 102px; background: #5a6577; }
.tools { display: flex; gap: 8px; }
.tool { width: 78px; height: 78px; padding: 5px; border: 2px solid transparent; }
.tool svg { width: 64px; height: 64px; overflow: visible; }
.tool.on { background: #335266; border-color: #17749a; border-radius: 2px; }
.glabel { display: flex; align-items: center; gap: 8px; margin-top: 1px; padding: 0 14px; font-size: 23px; line-height: 32px; white-space: nowrap; }

.view { position: relative; flex: 1; min-height: 1200px; overflow: hidden; background: #435062; }
.scene { position: absolute; inset: 0; width: 100%; height: 100%; }
.edge { fill: none; stroke: #15191c; stroke-width: 2; }
.seam { fill: none; stroke: #a3a8ad; stroke-width: 3; }
.dim-text { font: 400 26px "Inter", sans-serif; fill: #d6d9db; }
.cube { position: absolute; top: 50px; right: 10px; width: 200px; height: 180px; }
.face { font-weight: 600; fill: #5f6a7b; }
.face.top { font-size: 18px; }
.face.front { font-size: 22px; }
.axis { font: 400 28px "Inter", sans-serif; }
.axis.y { font-size: 26px; }

.phead { display: flex; align-items: center; background: #3a4454; border: 2px solid #445469; }
.min { width: 16px; height: 4px; background: #a1a5b0; }
.dbl { width: 16px; height: 12px; background: #7d8fa8; }
.dbl.left { clip-path: polygon(0 50%, 50% 0, 50% 50%, 100% 0, 100% 100%, 50% 50%, 50% 100%); }
.dbl.right { clip-path: polygon(100% 50%, 50% 0, 50% 50%, 0 0, 0 100%, 50% 50%, 50% 100%); }

.browser { position: absolute; top: 8px; left: 8px; width: 600px; }
.browser .phead { height: 50px; padding: 0 24px 0 10px; }
.browser h2 { flex: 1; margin-left: 28px; }
.tree { list-style: none; margin: 10px 0 0; padding: 0; display: flex; flex-direction: column; align-items: flex-start; gap: 8px; }
.tree li { position: relative; display: flex; height: 40px; }
.lv0 { margin-left: 72px; }
.lv1 { margin-left: 108px; }
.lv2 { margin-left: 144px; }
.chev { position: absolute; left: -40px; top: 8px; }
.chev svg { width: 24px; height: 24px; }
.chev path { fill: none; stroke: #fff; stroke-width: 3; filter: drop-shadow(0 0 2px #222); }
.eye { width: 50px; padding-left: 6px; background: #3a4454; }
.eye svg, .node svg { width: 32px; height: 32px; }
.node { display: flex; align-items: center; gap: 28px; padding: 0 24px 2px 6px; background: #3a4454; white-space: nowrap; }
.root .node { background: #222933; font-weight: 600; padding-right: 16px; }
.radio { display: flex; align-items: center; justify-content: center; width: 50px; background: #363c44; }
.radio i { width: 24px; height: 24px; border: 6px solid #fff; border-radius: 12px; }
.sel .node { height: 42px; margin: -1px 0 0 -1px; padding: 0 20px 0 4px; background: #335266; border: 2px solid #04a1e2; border-radius: 2px; }
.active .node { background: linear-gradient(90deg, #18739a 50px, #335266 50px); font-weight: 600; }
.wavy::after { content: ""; position: absolute; left: 50px; right: 0; bottom: 3px; height: 8px; background: repeating-linear-gradient(125deg, #04a1e2 0 4px, transparent 4px 10px); }

.snap { position: absolute; left: 1179px; top: 611px; height: 38px; padding: 0 8px; line-height: 34px; font-family: "Inter", sans-serif; font-size: 26px; background: #3a4454; border: 2px solid #10141a; box-shadow: inset 0 0 0 2px #56647a, 0 8px 24px 6px rgba(30, 34, 38, .4); white-space: nowrap; }
.float { position: absolute; left: 1146px; top: 888px; display: flex; align-items: center; height: 46px; padding: 2px 18px 2px 8px; background: #3a4454; }
.float .grip { width: 8px; height: 38px; margin-right: 12px; background: repeating-linear-gradient(125deg, #4d5a6d 0 2px, transparent 2px 6px); }
.float input { width: 236px; height: 42px; padding: 0; border: 0; border-bottom: 3px solid #049fe0; text-align: center; font-weight: 500; background: linear-gradient(#1c5f80, #1c5f80) center / 108px 34px no-repeat #28323e; }
.dots { display: flex; flex-direction: column; gap: 4px; width: 50px; align-items: center; }
.dots i { width: 6px; height: 6px; border-radius: 3px; background: #8a8e96; }
.pv { margin-left: 8px; }
.pv svg { width: 34px; height: 34px; }

.panel { position: absolute; top: 248px; right: 8px; width: 500px; background: #3a4454; border: 2px solid #445469; font-weight: 500; }
.panel > .phead { height: 47px; padding: 0 12px 0 22px; border-width: 0 0 2px; }
.panel h2 { flex: 1; margin-left: 17px; }
.row { display: flex; align-items: center; height: 62px; padding-left: 24px; }
.row label, .lab { width: 165px; white-space: nowrap; font-size: 23px; }
.off label { color: #878c94; }
.drop { position: relative; display: flex; align-items: center; width: 244px; height: 56px; background: #28323e; border: 2px solid #212b36; }
.drop svg { width: 32px; height: 32px; margin-left: 5px; }
.drop select { position: absolute; inset: 0; width: 100%; padding: 0 0 0 45px; appearance: none; background: none; border: 0; font-weight: 500; }
.drop .caret { margin-left: auto; margin-right: 9px; }
.picked { display: flex; align-items: center; gap: 6px; width: 168px; height: 56px; padding-left: 11px; background: #335266; border: 2px solid #04a1e2; border-radius: 2px; white-space: nowrap; font-size: 23px; }
.picked svg { width: 24px; height: 34px; fill: #d9dbda; }
.clear { margin-left: 24px; }
.clear svg { width: 15px; height: 15px; fill: none; stroke: #a1a5b0; stroke-width: 2; }
.types { display: flex; gap: 12px; }
.types button { width: 46px; height: 56px; padding: 0 4px; border: 2px solid transparent; }
.types svg { width: 34px; height: 34px; }
.types .on { background: #335266; border-color: #17749a; border-radius: 2px; }
.field { width: 243px; height: 54px; padding: 0 6px 2px; background: #28323e; border: 2px solid #212b36; font-weight: 500; }
.off input { appearance: none; width: 24px; height: 24px; margin: 0 0 0 11px; border: 2px solid #5c6879; }
.panel footer { display: flex; align-items: center; height: 74px; padding: 0 26px 0 26px; border-top: 2px solid #445469; margin-top: 2px; }
.info { width: 28px; height: 28px; margin-right: auto; }
.info circle { fill: #7d90ab; }
.info path { fill: #3a4454; }
.btn { width: 126px; height: 48px; border: 2px solid #7288a3; border-radius: 4px; font-size: 23px; }
.ok { width: 86px; margin-right: 44px; }

.comments { position: absolute; left: 8px; bottom: 8px; width: 600px; height: 50px; padding: 0 24px 0 54px; }
.comments h2 { flex: 1; }
.add svg { width: 16px; height: 16px; fill: #a1a5b0; }
.navbar { position: absolute; left: 1232px; bottom: 12px; display: flex; align-items: center; height: 48px; padding: 0 6px 0 5px; background: #3a4454; }
.navbar button { display: flex; align-items: center; gap: 9px; margin-right: 18px; }
.navbar button.dd { margin-right: 9px; }
.navbar button:first-child { gap: 11px; margin-right: 13px; }
.navbar button:last-child { margin: 0 0 0 -4px; }
.navbar svg { width: 34px; height: 34px; }
.hint { position: absolute; right: 36px; bottom: 11px; font-weight: 600; color: #e8e8ee; }

.timeline { display: flex; height: 100px; background: #3a4454; }
.play { display: flex; align-items: flex-start; gap: 18px; padding: 40px 0 0 19px; width: 292px; }
.play svg { width: 32px; height: 32px; }
.features { display: flex; list-style: none; margin: 36px 0 0; padding: 0; }
.features li { width: 48px; }
.features li:last-child { width: 28px; }
.features button { display: block; }
.features svg { width: 32px; height: 32px; overflow: visible; }
.features i { display: block; width: 48px; height: 14px; margin: 6px 0 0 16px; border: solid #5a6678; border-width: 0 0 4px 4px; }
.features li:last-child i { width: 4px; }
.marker { width: 24px; height: 64px; margin-top: 24px; fill: #ced1d7; }
.settings { margin: 40px 24px 0 auto; align-self: flex-start; }
.settings svg { width: 32px; height: 32px; }
</style>
